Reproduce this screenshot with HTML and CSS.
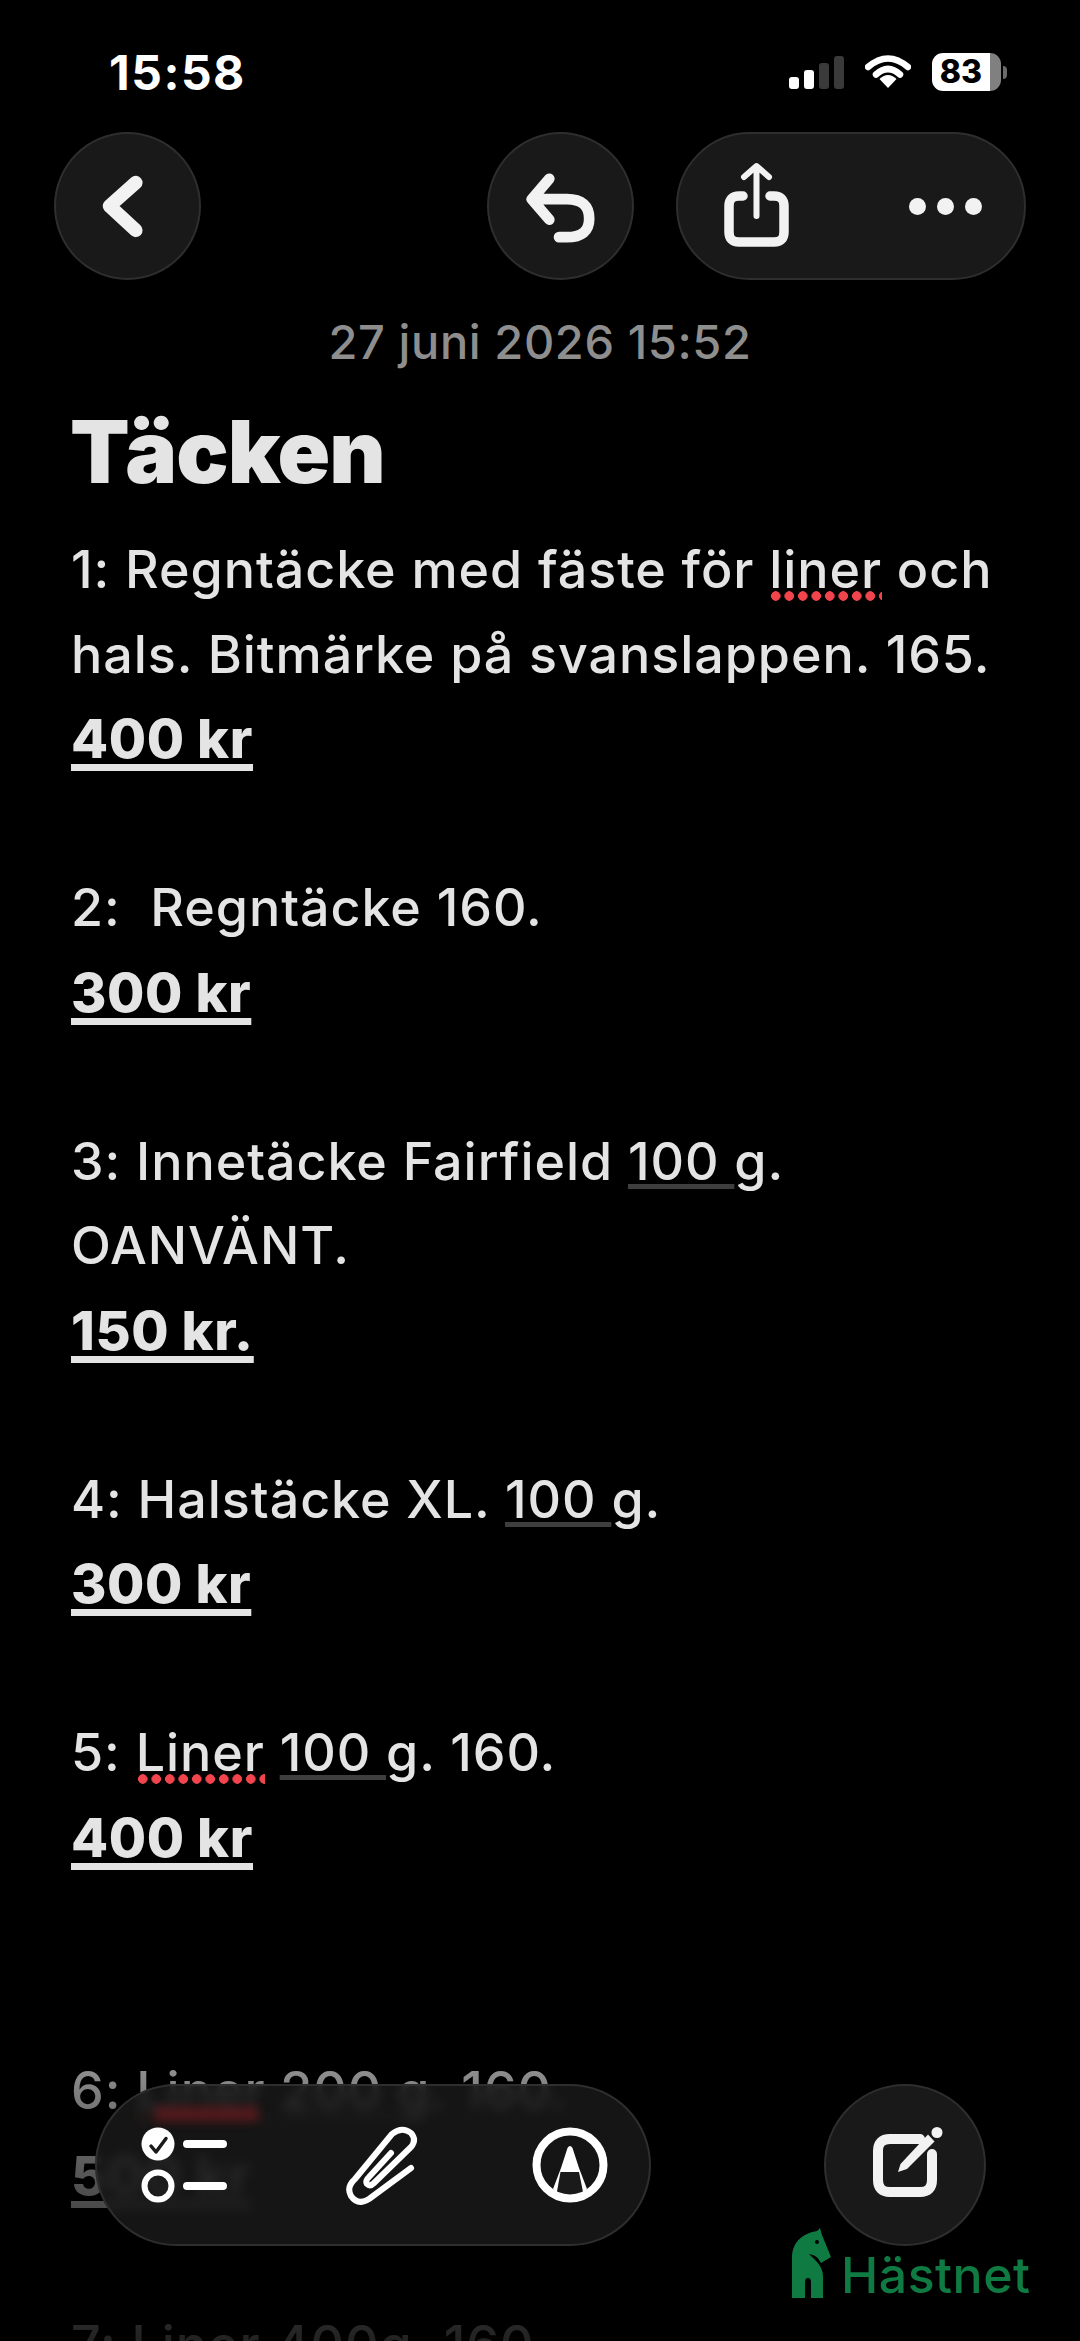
FILE: index.html
```html
<!DOCTYPE html>
<html lang="sv">
<head>
    <meta charset="UTF-8">
    <meta name="viewport" content="width=device-width, initial-scale=1.0">
    <title>Täcken</title>
    <link rel="stylesheet" href="styles.css">
</head>
<body>
    <div class="page">
        <!-- Statusrad -->
        <div class="status">
            <span class="time">15:58</span>
            <div class="status-icons">
                <div class="signal">
                    <span class="bar bar-1"></span>
                    <span class="bar bar-2"></span>
                    <span class="bar bar-3 off"></span>
                    <span class="bar bar-4 off"></span>
                </div>
                <svg class="wifi" width="46" height="34" viewBox="0 0 46 34">
                    <path d="M3 12 Q23 -5 43 12" fill="none" stroke="#fff" stroke-width="6.5" stroke-linecap="round"/>
                    <path d="M11 19.5 Q23 8.5 35 19.5" fill="none" stroke="#fff" stroke-width="6.5" stroke-linecap="round"/>
                    <path d="M14.5 24 Q23 16 31.5 24 L23 33 Z" fill="#fff"/>
                </svg>
                <div class="battery">
                    <span class="battery-level">83</span>
                </div>
                <span class="battery-nub"></span>
            </div>
        </div>

        <!-- Knappar överst -->
        <div class="topbar">
            <button class="round-btn">
                <svg width="147" height="148" viewBox="0 0 147 148">
                    <path d="M82 50 L55 74 L82 99" fill="none" stroke="#f2f2f2" stroke-width="14" stroke-linecap="round" stroke-linejoin="round"/>
                </svg>
            </button>
            <div class="topbar-right">
                <button class="round-btn">
                    <svg width="147" height="148" viewBox="0 0 147 148">
                        <path d="M62 46 L44 67 L62 88 M44 67 H80 Q103 67 103 87 Q103 106 80 106 H72" fill="none" stroke="#f2f2f2" stroke-width="11" stroke-linecap="round" stroke-linejoin="round"/>
                    </svg>
                </button>
                <div class="pill">
                    <svg width="75" height="95" viewBox="0 0 75 95">
                        <path d="M24 37 H20 Q10 37 10 47 V73 Q10 83 20 83 H55 Q65 83 65 73 V47 Q65 37 55 37 H51" fill="none" stroke="#f2f2f2" stroke-width="9.5" stroke-linecap="round"/>
                        <path d="M37.5 9 V57 M25 18 L37.5 7 L50 18" fill="none" stroke="#f2f2f2" stroke-width="6" stroke-linecap="round" stroke-linejoin="round"/>
                    </svg>
                    <div class="dots">
                        <span></span><span></span><span></span>
                    </div>
                </div>
            </div>
        </div>

        <div class="date">27 juni 2026 15:52</div>
        <h1 class="title">Täcken</h1>

        <div class="note">
            <p>1: Regntäcke med fäste för <span class="typo">liner</span> och hals. Bitmärke på svanslappen. 165. <strong>400 kr</strong></p>
            <p>2:&nbsp; Regntäcke 160. <strong>300 kr</strong></p>
            <p>3: Innetäcke Fairfield <span class="detected">100&nbsp;</span>g. OANVÄNT. <strong>150 kr.</strong></p>
            <p>4: Halstäcke XL. <span class="detected">100&nbsp;</span>g. <strong>300 kr</strong></p>
            <p class="big-gap">5: <span class="typo">Liner</span> <span class="detected">100&nbsp;</span>g. 160. <strong>400 kr</strong></p>
            <p>6: <span class="typo">Liner</span> <span class="detected">200&nbsp;</span>g. 160. <strong>500 kr</strong></p>
            <p>7: <span class="typo">Liner</span> 400g. 160.</p>
        </div>

        <div class="fade"></div>

        <!-- Verktygsrad nederst -->
        <div class="toolbar">
            <span class="ghost-red"></span>
            <svg width="90" height="76" viewBox="0 0 90 76">
                <circle cx="17" cy="17" r="16.5" fill="#fff"/>
                <path d="M10 19 L15 25 L25 11.5" fill="none" stroke="#1a1a1a" stroke-width="3.5" stroke-linecap="round" stroke-linejoin="round"/>
                <circle cx="17" cy="59" r="13.5" fill="none" stroke="#fff" stroke-width="6"/>
                <path d="M46 17 H82 M46 59 H82" fill="none" stroke="#fff" stroke-width="8" stroke-linecap="round"/>
            </svg>
            <svg width="75" height="84" viewBox="0 0 75 84">
                <path d="M67 45 L25 76 Q14 83 7 73 Q2 64 11 56 L48 11 Q58 3 67 10 Q73 17 67 24 L30 60 Q26 64 23 61 Q21 58 25 54 L47 30" fill="none" stroke="#fff" stroke-width="6" stroke-linecap="round" stroke-linejoin="round"/>
            </svg>
            <svg width="76" height="76" viewBox="0 0 76 76">
                <path d="M35.5 21 Q38 17 40.5 21 L47 41 L55 62 L50 68 H26 L21 62 L29 41 Z" fill="#fff"/>
                <path d="M28.5 45 H47 L52 70 H24 Z" fill="#1a1a1a"/>
                <circle cx="38" cy="38" r="33.5" fill="none" stroke="#fff" stroke-width="8"/>
            </svg>
        </div>
        <button class="compose">
            <svg width="78" height="78" viewBox="0 0 78 78">
                <path d="M54 13 H24 Q12 13 12 25 V54 Q12 66 24 66 H54 Q66 66 66 54 V28" fill="none" stroke="#f2f2f2" stroke-width="10" stroke-linecap="round"/>
                <path d="M32 46 L34.5 38 L62 8.5 L68.5 15.5 L41 43 Z" fill="#f2f2f2"/>
                <circle cx="71" cy="6.5" r="5.5" fill="#f2f2f2"/>
            </svg>
        </button>

        <!-- Vattenstämpel -->
        <div class="watermark">
            <svg width="44" height="74" viewBox="0 0 44 74">
                <path d="M2 72 V32 C2 15 14 7 27 5 L30 2 L32 9 L41 31 L31 37 C28 31 25 29 19 28 C25 34 33 40 33 50 V72 H21 V56 Q21 52 18 52 Q15 52 15 56 V72 Z" fill="#0f7a42"/>
                <circle cx="27" cy="16" r="2" fill="#000"/>
            </svg>
            <span class="brand">Hästnet</span>
        </div>
    </div>
</body>
</html>
```

FILE: styles.css
```css
body {
    margin: 0;
    background-color: #000;
    color: #e4e4e4;
    font-family: 'Inter', 'Liberation Sans', sans-serif;
}
button {
    padding: 0;
    border: none;
    background: none;
    color: inherit;
}
.page {
    position: relative;
    height: 2341px;
    overflow: hidden;
    background-color: #000;
}
.status {
    display: flex;
    justify-content: space-between;
    align-items: center;
    height: 44px;
    padding: 50px 73px 38px 109px;
}
.time {
    font-size: 48px;
    font-weight: 700;
    letter-spacing: 1.5px;
    color: #fff;
}
.status-icons {
    display: flex;
    align-items: center;
}
.signal {
    display: flex;
    align-items: flex-end;
    gap: 5px;
    height: 33px;
    margin-right: 21px;
}
.bar {
    width: 10px;
    background-color: #fff;
    border-radius: 3px;
}
.bar-1 { height: 12px; }
.bar-2 { height: 19px; }
.bar-3 { height: 26px; }
.bar-4 { height: 33px; }
.bar.off {
    background-color: #3a3a3a;
}
.wifi {
    margin-right: 21px;
}
.battery {
    width: 69px;
    height: 38px;
    border-radius: 11px;
    background: linear-gradient(to right, #fff 84%, #808080 84%);
    overflow: hidden;
}
.battery-level {
    display: block;
    width: 58px;
    color: #000;
    font-size: 32px;
    font-weight: 800;
    line-height: 38px;
    text-align: center;
}
.battery-nub {
    width: 4px;
    height: 13px;
    margin-left: 2px;
    background-color: #6a6a6a;
    border-radius: 0 4px 4px 0;
}
.topbar {
    display: flex;
    justify-content: space-between;
    padding: 0 54px;
}
.topbar-right {
    display: flex;
    gap: 42px;
}
.round-btn {
    width: 147px;
    height: 148px;
    box-sizing: border-box;
    border-radius: 50%;
    background-color: #191919;
    border: 2px solid #2e2e2e;
    display: flex;
    align-items: center;
    justify-content: center;
}
.pill {
    width: 350px;
    height: 148px;
    box-sizing: border-box;
    display: flex;
    align-items: center;
    justify-content: space-between;
    padding: 0 42px 0 41px;
    border-radius: 74px;
    background-color: #191919;
    border: 2px solid #2e2e2e;
}
.dots {
    display: flex;
    gap: 11px;
}
.dots span {
    width: 17px;
    height: 17px;
    border-radius: 50%;
    background-color: #f2f2f2;
}
.date {
    margin-top: 35px;
    font-size: 47px;
    font-weight: 500;
    line-height: 54px;
    letter-spacing: 0.6px;
    text-align: center;
    color: #8e8e8e;
}
.title {
    margin: 33px 0 0;
    padding-left: 70px;
    font-size: 87px;
    font-weight: 900;
    line-height: 100px;
    letter-spacing: -1px;
}
.note {
    margin-top: 26px;
    padding: 0 40px 0 71px;
    font-size: 52px;
    font-weight: 500;
    line-height: 84.5px;
    letter-spacing: 0.95px;
}
.note p {
    margin: 0 0 84.5px;
}
.note p.big-gap {
    margin-bottom: 169px;
}
.note strong {
    display: block;
    font-size: 54px;
    font-weight: 800;
    letter-spacing: 0.6px;
    text-decoration: underline;
    text-decoration-thickness: 7px;
    text-underline-offset: 6px;
    text-decoration-skip-ink: none;
}
.typo {
    background: radial-gradient(circle, #f2444c 4.5px, transparent 5px) left bottom / 13.5px 10px repeat-x;
}
.detected {
    text-decoration: underline #3e3e3e;
    text-decoration-thickness: 5px;
    text-underline-offset: 4px;
    text-decoration-skip-ink: none;
}
.fade {
    position: absolute;
    left: 0;
    right: 0;
    top: 1960px;
    height: 381px;
    background: linear-gradient(to bottom, rgba(0,0,0,0), rgba(0,0,0,0.45) 35%, rgba(0,0,0,0.65) 60%, rgba(0,0,0,0.85) 100%);
}
.toolbar {
    position: absolute;
    left: 95px;
    top: 2084px;
    width: 556px;
    height: 162px;
    box-sizing: border-box;
    display: flex;
    align-items: center;
    justify-content: space-between;
    padding: 0 41px 0 44px;
    border-radius: 81px;
    background-color: rgba(26, 26, 26, 0.8);
    border: 2px solid #2e2e2e;
    backdrop-filter: blur(6px);
}
.ghost-red {
    position: absolute;
    left: 58px;
    top: 20px;
    width: 103px;
    height: 16px;
    background-color: rgba(170, 25, 35, 0.35);
    filter: blur(4px);
}
.compose {
    position: absolute;
    left: 824px;
    top: 2084px;
    width: 162px;
    height: 162px;
    box-sizing: border-box;
    display: flex;
    align-items: center;
    justify-content: center;
    border-radius: 50%;
    background-color: #191919;
    border: 2px solid #2e2e2e;
}
.watermark {
    position: absolute;
    left: 790px;
    top: 2226px;
    display: flex;
    align-items: flex-end;
    gap: 7px;
}
.brand {
    font-size: 50px;
    font-weight: 500;
    line-height: 50px;
    letter-spacing: 0.5px;
    color: #0f7a42;
}
```
